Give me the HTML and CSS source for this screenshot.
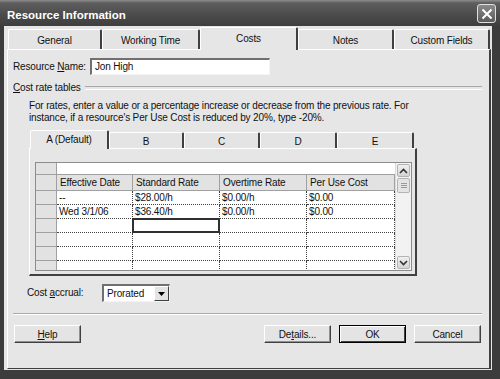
FILE: index.html
```html
<!DOCTYPE html>
<html lang="en">
<head>
  <meta charset="UTF-8" />
  <title>Resource Information</title>
  <link rel="stylesheet" href="styles.css">
</head>
<body>
  <div class="window">
    <div class="titlebar">
      <span class="title">Resource Information</span>
      <div class="close-btn">
        <svg width="12" height="12" viewBox="0 0 12 12"><path d="M1.5 1.5 L10.5 10.5 M10.5 1.5 L1.5 10.5" stroke="#fff" stroke-width="2" /></svg>
      </div>
    </div>

    <div class="client">
      <div class="tabs">
        <div class="tab t-general">General</div>
        <div class="tab t-working">Working Time</div>
        <div class="tab t-costs active">Costs</div>
        <div class="tab t-notes">Notes</div>
        <div class="tab t-custom">Custom Fields</div>
      </div>

      <div class="panel">
        <div class="field-row">
          <span class="label name-label">Resource <u>N</u>ame:</span>
          <div class="textbox">Jon High</div>
        </div>

        <div class="group-title"><span><u>C</u>ost rate tables</span></div>

        <p class="hint">For rates, enter a value or a percentage increase or decrease from the previous rate. For<br>instance, if a resource's Per Use Cost is reduced by 20%, type -20%.</p>

        <div class="subtabs">
          <div class="subtab s-a active">A (Default)</div>
          <div class="subtab s-b">B</div>
          <div class="subtab s-c">C</div>
          <div class="subtab s-d">D</div>
          <div class="subtab s-e">E</div>
        </div>

        <div class="subpanel">
          <div class="sheet">
            <div class="grid">
              <div class="row row-top">
                <div class="rh"></div>
                <div class="edit-line"></div>
              </div>
              <div class="row row-head">
                <div class="rh"></div>
                <div class="ch c1">Effective Date</div>
                <div class="ch c2">Standard Rate</div>
                <div class="ch c3">Overtime Rate</div>
                <div class="ch c4">Per Use Cost</div>
              </div>
              <div class="row">
                <div class="rh"></div>
                <div class="cell c1">--</div>
                <div class="cell c2">$28.00/h</div>
                <div class="cell c3">$0.00/h</div>
                <div class="cell c4">$0.00</div>
              </div>
              <div class="row">
                <div class="rh"></div>
                <div class="cell c1">Wed 3/1/06</div>
                <div class="cell c2">$36.40/h</div>
                <div class="cell c3">$0.00/h</div>
                <div class="cell c4">$0.00</div>
              </div>
              <div class="row">
                <div class="rh"></div>
                <div class="cell c1"></div>
                <div class="cell c2 selected"></div>
                <div class="cell c3"></div>
                <div class="cell c4"></div>
              </div>
              <div class="row">
                <div class="rh"></div>
                <div class="cell c1"></div>
                <div class="cell c2"></div>
                <div class="cell c3"></div>
                <div class="cell c4"></div>
              </div>
              <div class="row">
                <div class="rh"></div>
                <div class="cell c1"></div>
                <div class="cell c2"></div>
                <div class="cell c3"></div>
                <div class="cell c4"></div>
              </div>
              <div class="row">
                <div class="rh"></div>
                <div class="cell c1"></div>
                <div class="cell c2"></div>
                <div class="cell c3"></div>
                <div class="cell c4"></div>
              </div>
            </div>

            <div class="scrollbar">
              <div class="sb-btn">
                <svg width="9" height="6" viewBox="0 0 9 6"><path d="M1 5 L4.5 1.5 L8 5" fill="none" stroke="#333" stroke-width="1.6" /></svg>
              </div>
              <div class="sb-thumb"><span></span><span></span><span></span></div>
              <div class="sb-track"></div>
              <div class="sb-btn">
                <svg width="9" height="6" viewBox="0 0 9 6"><path d="M1 1 L4.5 4.5 L8 1" fill="none" stroke="#333" stroke-width="1.6" /></svg>
              </div>
            </div>
          </div>
        </div>

        <div class="field-row accrual">
          <span class="label accrual-label">Cost <u>a</u>ccrual:</span>
          <div class="combo">
            <span class="combo-text">Prorated</span>
            <div class="combo-btn">
              <svg width="7" height="4" viewBox="0 0 7 4"><path d="M0 0 L7 0 L3.5 4 Z" fill="#000" /></svg>
            </div>
          </div>
        </div>

        <div class="separator"></div>

        <div class="buttons">
          <div class="btn"><u>H</u>elp</div>
          <div class="btn-group">
            <div class="btn">De<u>t</u>ails...</div>
            <div class="btn default">OK</div>
            <div class="btn">Cancel</div>
          </div>
        </div>
      </div>
    </div>
  </div>
</body>
</html>
```

FILE: styles.css
```css
* {
  box-sizing: border-box;
}
body {
  margin: 0;
  padding: 0;
  background-color: #3a3a3a;
  font-family: "Liberation Sans", Arial, sans-serif;
  font-size: 10px;
  letter-spacing: -0.15px;
  color: #111;
}
u {
  text-decoration: underline;
  text-underline-offset: 1px;
}
.window {
  width: 500px;
  height: 379px;
  display: flex;
  flex-direction: column;
  background: #3c3c3c;
  overflow: hidden;
}
.titlebar {
  height: 26px;
  display: flex;
  align-items: center;
  justify-content: space-between;
  padding: 0 4px 0 7px;
  background: linear-gradient(#8c8c8c 0, #5e5e5e 3px, #4c4c4c 55%, #3e3e3e 100%);
}
.title {
  color: #fff;
  font-weight: bold;
  font-size: 11.5px;
  letter-spacing: 0;
  margin-top: 3px;
}
.close-btn {
  width: 19px;
  height: 19px;
  margin-top: 1px;
  border: 1px solid #e0e0e0;
  border-radius: 3px;
  background: linear-gradient(#8a8a8a, #5a5a5a);
  display: flex;
  align-items: center;
  justify-content: center;
}
.client {
  flex: 1;
  margin: 0 8px 9px 4px;
  background: #e6e6e6;
  padding: 1px 0 1px 3px;
  display: flex;
  flex-direction: column;
}

/* outer tabs */
.tabs {
  display: flex;
  height: 22px;
  padding-left: 1px;
}
.tab {
  height: 20px;
  margin-top: 2px;
  display: flex;
  align-items: center;
  justify-content: center;
  background: #e4e4e4;
  border-top: 1px solid #fff;
  border-left: 1px solid #fff;
  border-right: 2px solid #404040;
  border-radius: 2px 2px 0 0;
  padding-top: 1px;
}
.t-general { width: 94px; }
.t-working { width: 98px; }
.t-costs { width: 98px; }
.t-notes { width: 96px; }
.t-custom { width: 96px; }
.tab.active {
  height: 23px;
  margin-top: 0;
  margin-bottom: -1px;
  background: #e6e6e6;
  position: relative;
  z-index: 1;
  padding-bottom: 3px;
}
.panel {
  width: 484px;
  height: 320px;
  border-top: 1px solid #fff;
  border-left: 1px solid #fff;
  border-right: 2px solid #404040;
  border-bottom: 1px solid #404040;
  padding: 8px 7px 0 5px;
  display: flex;
  flex-direction: column;
}

.field-row {
  display: flex;
  align-items: center;
  height: 17px;
}
.label {
  line-height: 12px;
  white-space: nowrap;
  flex-shrink: 0;
}
.name-label {
  width: 77px;
}
.textbox {
  width: 180px;
  height: 17px;
  background: #fff;
  border-top: 2px solid #707070;
  border-left: 2px solid #707070;
  border-right: 1px solid #f4f4f4;
  border-bottom: 1px solid #f4f4f4;
  padding: 1px 3px;
  line-height: 12px;
}

.group-title {
  display: flex;
  align-items: center;
  margin-top: 7px;
  height: 12px;
  line-height: 12px;
}
.group-title::after {
  content: "";
  flex: 1;
  height: 2px;
  border-top: 1px solid #a8a8a8;
  border-bottom: 1px solid #fff;
  margin-left: 4px;
}
.hint {
  margin: 6px 0 0 16px;
  line-height: 12px;
  white-space: nowrap;
}

/* rate table tabs */
.subtabs {
  display: flex;
  margin: 6px 0 0 17px;
  height: 18px;
}
.subtab {
  height: 16px;
  margin-top: 2px;
  display: flex;
  align-items: center;
  justify-content: center;
  background: #e4e4e4;
  border-top: 1px solid #fff;
  border-left: 1px solid #fff;
  border-right: 2px solid #404040;
  border-radius: 2px 2px 0 0;
  padding-top: 1px;
}
.s-a { width: 79px; }
.s-b { width: 75px; }
.s-c { width: 76px; }
.s-d { width: 77px; }
.s-e { width: 77px; }
.subtab.active {
  height: 19px;
  margin-top: 0;
  margin-bottom: -1px;
  background: #e6e6e6;
  position: relative;
  z-index: 1;
  padding-bottom: 3px;
}
.subpanel {
  margin-left: 16px;
  width: 388px;
  height: 128px;
  border-top: 1px solid #fff;
  border-left: 1px solid #fff;
  border-right: 2px solid #404040;
  border-bottom: 2px solid #404040;
  padding: 13px 0 0 5px;
}
.sheet {
  width: 377px;
  height: 109px;
  display: flex;
  border: 1px solid #8c8c8c;
  background: #fff;
  overflow: hidden;
}
.grid {
  width: 359px;
}
.row {
  display: flex;
  height: 14px;
}
.row-top {
  height: 12px;
}
.row-head {
  height: 16px;
}
.rh {
  width: 21px;
  background: #e2e2e2;
  border-right: 1px solid #a0a0a0;
  border-bottom: 1px solid #a0a0a0;
}
.edit-line {
  flex: 1;
  border-bottom: 1px solid #a0a0a0;
}
.c1 { width: 76px; }
.c2 { width: 87px; }
.c3 { width: 87px; }
.c4 { width: 88px; }
.ch {
  background: #e2e2e2;
  border-right: 1px solid #a0a0a0;
  border-bottom: 1px solid #a0a0a0;
  padding: 2px 0 0 3px;
  line-height: 12px;
  white-space: nowrap;
}
.cell {
  border-right: 1px dotted #404040;
  border-bottom: 1px dotted #404040;
  padding: 1px 0 0 2px;
  line-height: 12px;
  white-space: nowrap;
}
.cell.selected {
  border: 2px solid #303030;
  margin: -1px 0 0 -1px;
  height: 15px;
  width: 88px;
}
.scrollbar {
  width: 16px;
  display: flex;
  flex-direction: column;
  padding: 1px;
  background: #f2f2f2;
  border-left: 1px solid #dcdcdc;
}
.sb-btn {
  height: 13px;
  border: 1px solid #b4b4b4;
  border-radius: 2px;
  background: linear-gradient(#f0f0f0, #d4d4d4);
  display: flex;
  align-items: center;
  justify-content: center;
}
.sb-thumb {
  height: 15px;
  margin-top: 1px;
  border: 1px solid #b4b4b4;
  border-radius: 2px;
  background: #e4e4e4;
  display: flex;
  flex-direction: column;
  align-items: center;
  justify-content: center;
  gap: 1px;
}
.sb-thumb span {
  width: 6px;
  height: 1px;
  background: #9a9a9a;
}
.sb-track {
  flex: 1;
}

/* cost accrual */
.accrual {
  margin-top: 8px;
  height: 18px;
}
.accrual-label {
  margin-left: 14px;
  width: 75px;
}
.combo {
  width: 68px;
  height: 18px;
  background: #fff;
  border-top: 2px solid #707070;
  border-left: 2px solid #707070;
  border-right: 1px solid #f4f4f4;
  border-bottom: 1px solid #f4f4f4;
  display: flex;
  align-items: center;
  justify-content: space-between;
  padding-left: 3px;
}
.combo-btn {
  width: 15px;
  height: 15px;
  background: #e4e4e4;
  border-top: 1px solid #fff;
  border-left: 1px solid #fff;
  border-right: 1px solid #404040;
  border-bottom: 1px solid #404040;
  display: flex;
  align-items: center;
  justify-content: center;
}

.separator {
  margin-top: 11px;
  height: 2px;
  border-top: 1px solid #a8a8a8;
  border-bottom: 1px solid #fff;
}
.buttons {
  margin-top: 10px;
  display: flex;
  justify-content: space-between;
  padding-left: 1px;
}
.btn-group {
  display: flex;
  gap: 8px;
  margin-right: 1px;
}
.btn {
  width: 67px;
  height: 18px;
  display: flex;
  align-items: center;
  justify-content: center;
  background: #e4e4e4;
  border-top: 1px solid #fff;
  border-left: 1px solid #fff;
  border-right: 1px solid #404040;
  border-bottom: 1px solid #404040;
  box-shadow: inset -1px -1px 0 #909090;
}
.btn.default {
  border: 1px solid #000;
  box-shadow: inset 1px 1px 0 #fff, inset -1px -1px 0 #404040;
}
```
